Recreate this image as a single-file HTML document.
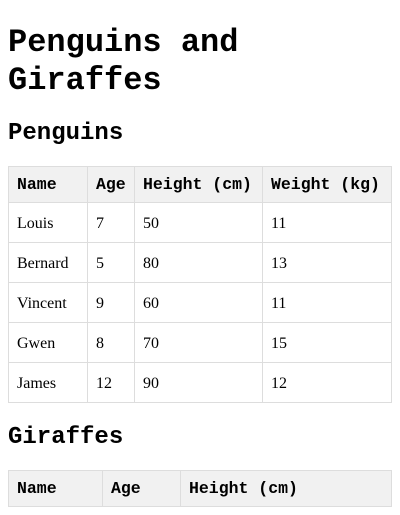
<!DOCTYPE html>
<html><head><style>
body{margin:0;padding:0 8px;background:#fff;color:#000;font-family:"Liberation Serif",serif;font-size:16px;}
h1{font-family:"Liberation Mono",monospace;font-size:32px;font-weight:bold;line-height:38px;margin:24px 0 0;}
h2{font-family:"Liberation Mono",monospace;font-size:24px;font-weight:bold;line-height:30px;margin:0;position:absolute;left:8px;}
table{border-collapse:collapse;table-layout:fixed;position:absolute;left:8px;}
th,td{border:1px solid #ddd;padding:0 8px;text-align:left;white-space:nowrap;}
th{background:#f1f1f1;font-family:"Liberation Mono",monospace;font-weight:bold;font-size:16.5px;height:35px;}
td{height:37px;padding-top:2px;}
</style></head><body>
<h1>Penguins and<br>Giraffes</h1>
<h2 style="top:119px">Penguins</h2>
<table style="top:166px;width:383px">
<colgroup><col style="width:79px"><col style="width:47px"><col style="width:128px"><col style="width:129px"></colgroup>
<tr><th>Name</th><th>Age</th><th>Height (cm)</th><th>Weight (kg)</th></tr>
<tr><td>Louis</td><td>7</td><td>50</td><td>11</td></tr>
<tr><td>Bernard</td><td>5</td><td>80</td><td>13</td></tr>
<tr><td>Vincent</td><td>9</td><td>60</td><td>11</td></tr>
<tr><td>Gwen</td><td>8</td><td>70</td><td>15</td></tr>
<tr><td>James</td><td>12</td><td>90</td><td>12</td></tr>
</table>
<h2 style="top:423px">Giraffes</h2>
<table style="top:470px;width:383px">
<colgroup><col style="width:94px"><col style="width:78px"><col style="width:211px"></colgroup>
<tr><th>Name</th><th>Age</th><th>Height (cm)</th></tr>
</table>
</body></html>
